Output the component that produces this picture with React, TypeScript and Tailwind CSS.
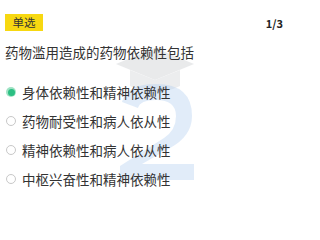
import type { ReactNode } from "react";

const options = [
  "身体依赖性和精神依赖性",
  "药物耐受性和病人依从性",
  "精神依赖性和病人依从性",
  "中枢兴奋性和精神依赖性",
];

// Watermark im Hintergrund: Doktorhut + große "2", sehr blass.
function Watermark(): ReactNode {
  return (
    <svg
      className="absolute left-[108px] top-[36px] pointer-events-none"
      width="95"
      height="150"
      viewBox="0 0 95 150"
    >
      <g opacity="0.18">
        <path d="M8 28 L47 12 L86 28 L47 44 Z" fill="#8a8f96" />
        <path d="M22 34 L22 50 Q47 62 72 50 L72 34 L47 44 Z" fill="#9aa0a6" />
      </g>
      <path
        d="M14 66 Q18 48 48 48 Q84 48 84 80 Q84 100 62 112 L34 128 L86 128 L86 144 L12 144 L12 130 L56 102 Q68 94 68 80 Q68 64 48 64 Q32 64 30 72 Z"
        fill="#b4d0f0"
        opacity="0.4"
      />
    </svg>
  );
}

function Radio({ checked }: { readonly checked: boolean }): ReactNode {
  if (checked) {
    return (
      <span className="w-[10px] h-[10px] rounded-full bg-[#9fe3c4] flex items-center justify-center shrink-0">
        <span className="w-[7px] h-[7px] rounded-full bg-[#2cbf83]" />
      </span>
    );
  }
  return <span className="w-[10px] h-[10px] rounded-full border border-[#c8c8c8] bg-white shrink-0" />;
}

export default function App(): ReactNode {
  return (
    <div
      className="relative w-[297px] h-[207px] bg-white overflow-hidden text-[#333]"
      style={{ fontFamily: '"Noto Sans CJK SC", "Noto Sans", sans-serif' }}
    >
      <Watermark />
      <div className="relative flex flex-col px-[5px]">
        <div className="flex items-center justify-between pt-[14px] pr-[9px]">
          <span className="h-[17px] w-[38px] bg-[#f7d811] flex items-center justify-center text-[11.5px] leading-none text-[#333]">
            单选
          </span>
          <span className="text-[11px] font-bold text-[#222] leading-none mt-[2px]">1/3</span>
        </div>
        <p className="mt-[12px] text-[13.5px] leading-[18px]">药物滥用造成的药物依赖性包括</p>
        <div className="mt-[22px] flex flex-col gap-[11px]">
          {options.map((o, i) => (
            <div key={o} className="flex items-center gap-[6px] pl-[1px] h-[18px]">
              <Radio checked={i === 0} />
              <span className="text-[13.5px] leading-[18px]">{o}</span>
            </div>
          ))}
        </div>
      </div>
    </div>
  );
}
